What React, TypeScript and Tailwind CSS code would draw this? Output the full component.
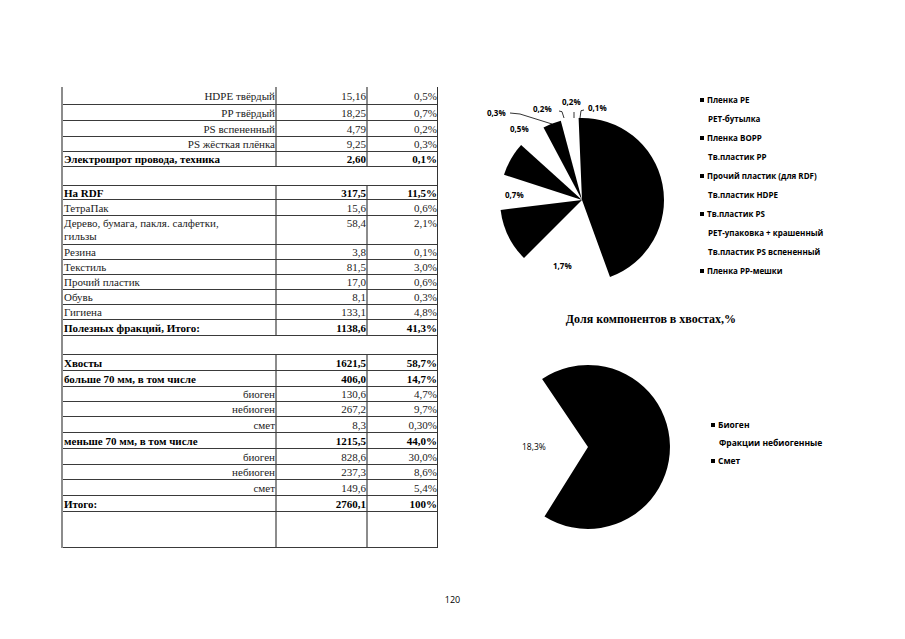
type Row = { l?: string; v?: string; p?: string; k: "sub" | "bold" | "plain" | "gap" | "tall" | "empty"; h: string };

const rows: Row[] = [
  { l: "HDPE твёрдый", v: "15,16", p: "0,5%", k: "sub", h: "h-[18px]" },
  { l: "PP твёрдый", v: "18,25", p: "0,7%", k: "sub", h: "h-[16px]" },
  { l: "PS вспененный", v: "4,79", p: "0,2%", k: "sub", h: "h-[16px]" },
  { l: "PS жёсткая плёнка", v: "9,25", p: "0,3%", k: "sub", h: "h-[15px]" },
  { l: "Электрошрот провода, техника", v: "2,60", p: "0,1%", k: "bold", h: "h-[15px]" },
  { k: "gap", h: "h-[19px]" },
  { l: "На RDF", v: "317,5", p: "11,5%", k: "bold", h: "h-[14px]" },
  { l: "ТетраПак", v: "15,6", p: "0,6%", k: "plain", h: "h-[16px]" },
  { l: "Дерево, бумага, пакля. салфетки,", v: "58,4", p: "2,1%", k: "tall", h: "h-[29px]" },
  { l: "Резина", v: "3,8", p: "0,1%", k: "plain", h: "h-[15px]" },
  { l: "Текстиль", v: "81,5", p: "3,0%", k: "plain", h: "h-[15px]" },
  { l: "Прочий пластик", v: "17,0", p: "0,6%", k: "plain", h: "h-[15px]" },
  { l: "Обувь", v: "8,1", p: "0,3%", k: "plain", h: "h-[15px]" },
  { l: "Гигиена", v: "133,1", p: "4,8%", k: "plain", h: "h-[15px]" },
  { l: "Полезных фракций, Итого:", v: "1138,6", p: "41,3%", k: "bold", h: "h-[16px]" },
  { k: "gap", h: "h-[19px]" },
  { l: "Хвосты", v: "1621,5", p: "58,7%", k: "bold", h: "h-[16px]" },
  { l: "больше 70 мм, в том числе", v: "406,0", p: "14,7%", k: "bold", h: "h-[16px]" },
  { l: "биоген", v: "130,6", p: "4,7%", k: "sub", h: "h-[15px]" },
  { l: "небиоген", v: "267,2", p: "9,7%", k: "sub", h: "h-[15px]" },
  { l: "смет", v: "8,3", p: "0,30%", k: "sub", h: "h-[16px]" },
  { l: "меньше 70 мм, в том числе", v: "1215,5", p: "44,0%", k: "bold", h: "h-[16px]" },
  { l: "биоген", v: "828,6", p: "30,0%", k: "sub", h: "h-[16px]" },
  { l: "небиоген", v: "237,3", p: "8,6%", k: "sub", h: "h-[15px]" },
  { l: "смет", v: "149,6", p: "5,4%", k: "sub", h: "h-[16px]" },
  { l: "Итого:", v: "2760,1", p: "100%", k: "bold", h: "h-[16px]" },
  { k: "empty", h: "h-[36px]" },
];

const legend1: [string, boolean][] = [
  ["Пленка PE", true],
  ["PET-бутылка", false],
  ["Пленка BOPP", true],
  ["Тв.пластик PP", false],
  ["Прочий пластик (для RDF)", true],
  ["Тв.пластик HDPE", false],
  ["Тв.пластик PS", true],
  ["PET-упаковка + крашенный", false],
  ["Тв.пластик PS вспененный", false],
  ["Пленка PP-мешки", true],
];

const legend2: [string, boolean][] = [
  ["Биоген", true],
  ["Фракции небиогенные", false],
  ["Смет", true],
];

function pt(cx: number, cy: number, r: number, deg: number) {
  const a = (deg * Math.PI) / 180;
  return [cx + r * Math.sin(a), cy - r * Math.cos(a)];
}

function wedge(cx: number, cy: number, r: number, a0: number, a1: number) {
  const [x0, y0] = pt(cx, cy, r, a0);
  const [x1, y1] = pt(cx, cy, r, a1);
  const large = a1 - a0 > 180 ? 1 : 0;
  return `M${cx} ${cy}L${x0.toFixed(1)} ${y0.toFixed(1)}A${r} ${r} 0 ${large} 1 ${x1.toFixed(1)} ${y1.toFixed(1)}Z`;
}

function TableRow({ r }: { r: Row }) {
  if (r.k === "gap") {
    return <div className={`${r.h} border-b border-[#3a3a3a]`} />;
  }
  const bold = r.k === "bold";
  const tall = r.k === "tall";
  const align = tall ? "items-start pt-[1px]" : "items-center";
  return (
    <div className={`${r.h} grid grid-cols-[214px_91px_70px] border-b border-[#3a3a3a] ${bold ? "font-bold text-black" : "text-[#222]"}`}>
      <div className={`flex ${align} border-r-2 border-[#8c8c8c] ${r.k === "sub" ? "justify-end" : "pl-[1px]"}`}>
        {tall ? (
          <span className="leading-[13px]">
            {r.l}
            <br />
            гильзы
          </span>
        ) : (
          r.l
        )}
      </div>
      <div className={`flex ${align} justify-end border-r-2 border-[#8c8c8c]`}>{r.v}</div>
      <div className={`flex ${align} justify-end pr-[1px]`}>{r.p}</div>
    </div>
  );
}

function Legend({ items, size, rowH }: { items: [string, boolean][]; size: string; rowH: string }) {
  return (
    <div className={`flex flex-col font-['Open_Sans',sans-serif] font-bold ${size} text-black`}>
      {items.map(([t, s]) => (
        <div key={t} className={`${rowH} flex items-center`}>
          <span className={`w-[4px] h-[4px] mr-[3px] ${s ? "bg-black" : "bg-transparent"}`} />
          <span className={s ? "" : "ml-[1px]"}>{t}</span>
        </div>
      ))}
    </div>
  );
}

export default function App() {
  const c1 = { x: 112, y: 113, r: 82 };
  const c2 = { x: 118, y: 97, r: 82 };
  return (
    <div className="w-[905px] h-[639px] bg-white flex flex-col overflow-hidden">
      <div className="flex items-start pt-[87px] pl-[61px]">
        <div className="w-[377px] border-l-2 border-l-[#8c8c8c] border-r border-r-[#333] font-['Liberation_Serif',serif] text-[11px] leading-[12px]">
          {rows.map((r, i) => (
            <TableRow key={i} r={r} />
          ))}
        </div>

        <div className="ml-[32px] w-[362px] flex flex-col">
          <div className="flex items-start">
            <svg width="220" height="200" viewBox="0 0 220 200" className="shrink-0">
              <path d={wedge(c1.x, c1.y, c1.r, -2.4, 160)} fill="#000" />
              <path d={wedge(c1.x, c1.y, c1.r, 225, 263)} fill="#000" />
              <path d={wedge(c1.x, c1.y, c1.r, 288, 312)} fill="#000" />
              <path d={wedge(c1.x, c1.y, c1.r, 332, 345)} fill="#000" />
              <g fill="none" stroke="#000" strokeWidth="0.8">
                <polyline points="40,26 50,27 82,37" />
                <polyline points="89,24 92,24.7 94,31" />
                <polyline points="104,25 104,31" />
                <polyline points="114,23 111,23.7 110,31" />
              </g>
              <g fontFamily="'Open Sans', sans-serif" fontWeight="700" fontSize="8" fill="#000">
                <text x="17" y="29">0,3%</text>
                <text x="63" y="25">0,2%</text>
                <text x="92" y="18">0,2%</text>
                <text x="118" y="24">0,1%</text>
                <text x="40" y="45">0,5%</text>
                <text x="35" y="111">0,7%</text>
                <text x="83" y="182">1,7%</text>
              </g>
            </svg>
            <div className="ml-[10px] mt-[3px]">
              <Legend items={legend1} size="text-[8px]" rowH="h-[19px]" />
            </div>
          </div>

          <div className="mt-[25px] text-center font-['Liberation_Serif',serif] font-bold text-[12px] leading-[14px] text-black">
            Доля компонентов в хвостах,%
          </div>

          <div className="mt-[24px] flex items-start">
            <svg width="220" height="190" viewBox="0 0 220 190" className="shrink-0">
              <path d={wedge(c2.x, c2.y, c2.r, 326, 572)} fill="#000" />
              <text x="52" y="100" fontFamily="'Open Sans', sans-serif" fontSize="8.5" fill="#000">
                18,3%
              </text>
            </svg>
            <div className="ml-[21px] mt-[66px]">
              <Legend items={legend2} size="text-[8.5px]" rowH="h-[18px]" />
            </div>
          </div>
        </div>
      </div>

      <div className="mt-auto mb-[33px] text-center font-['Open_Sans',sans-serif] text-[9px] leading-[12px] text-black">120</div>
    </div>
  );
}
